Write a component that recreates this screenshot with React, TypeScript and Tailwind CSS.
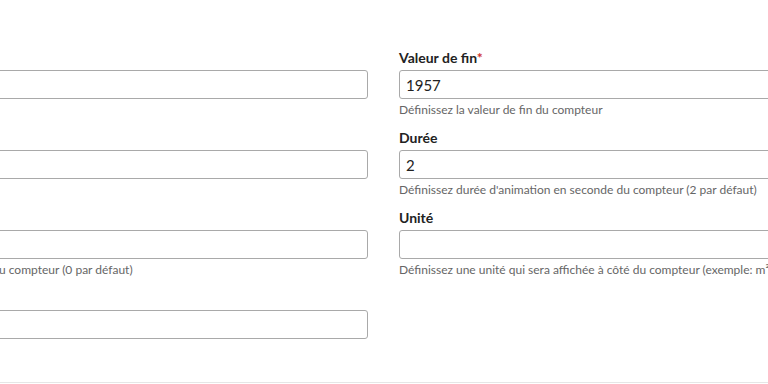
// Formulaire "Compteur" : deux colonnes de champs, la gauche coupée par le cadre
const fields = [
    { label: 'Valeur de départ', required: true, value: '', hint: '' },
    { label: 'Valeur de fin', required: true, value: '1957', hint: 'Définissez la valeur de fin du compteur' },
    { label: 'Préfixe', required: false, value: '', hint: '' },
    { label: 'Durée', required: false, value: '2', hint: "Définissez durée d'animation en seconde du compteur (2 par défaut)" },
    { label: 'Valeur de début', required: false, value: '', hint: 'Définissez la valeur de départ du compteur (0 par défaut)' },
    { label: 'Unité', required: false, value: '', hint: 'Définissez une unité qui sera affichée à côté du compteur (exemple: m²)' },
    { label: 'Séparateur', required: false, value: '', hint: '' },
];

function Field({ field }: { field: (typeof fields)[number] }) {
    return (
        <div className="flex flex-col">
            <label className="h-5 shrink-0 text-sm font-bold leading-5 text-[#222]">
                {field.label}
                {field.required && <span className="text-[#d0312d]">*</span>}
            </label>
            <input
                readOnly
                value={field.value}
                className="mt-[2px] h-[29px] w-full shrink-0 rounded-[3px] border border-[#a9a9a9] bg-white px-[6px] text-[15px] text-[#222] outline-none"
            />
            {field.hint && (
                <p className="mt-[3px] shrink-0 whitespace-nowrap text-xs leading-4 text-[#666]">{field.hint}</p>
            )}
        </div>
    );
}

export default function App() {
    return (
        <div className="h-[384px] w-[768px] overflow-hidden bg-white font-['Lato','Liberation_Sans',sans-serif]">
            <div className="ml-[-165px] grid w-[1097px] grid-cols-2 gap-x-[31px] gap-y-[13px] pt-[48px] [grid-auto-rows:67px]">
                {fields.map((f) => (
                    <Field key={f.label} field={f} />
                ))}
            </div>
            <div className="mt-[27px] border-t border-[#e6e6e6]" />
        </div>
    );
}
